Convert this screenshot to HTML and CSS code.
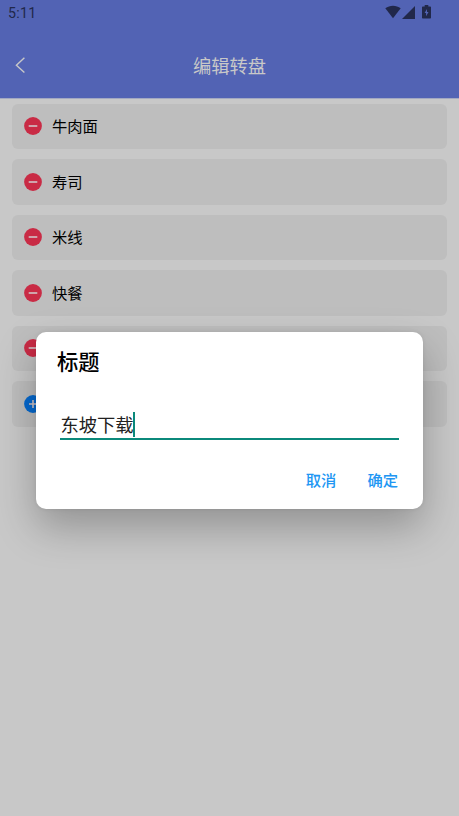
FILE: index.html
```html
<!DOCTYPE html>
<html lang="zh-CN">
<head>
<meta charset="utf-8">
<title>编辑转盘</title>
<link rel="stylesheet" href="styles.css">
</head>
<body>
<header class="header">
  <div class="status">
    <span class="time">5:11</span>
    <div class="status-icons">
      <svg class="wifi" width="16" height="14" viewBox="0 0 16 14"><path d="M0.3 3.3C4.8-.2 11.2-.2 15.7 3.3L8 13.2Z"/></svg>
      <svg class="signal" width="13" height="13" viewBox="0 0 13 13"><path d="M13 0V13H0Z"/></svg>
      <svg class="battery" width="9" height="14" viewBox="0 0 9 14"><path fill-rule="evenodd" d="M2.7 0H6.3V1.4H8.2Q9 1.4 9 2.2V12.7Q9 13.5 8.2 13.5H.8Q0 13.5 0 12.7V2.2Q0 1.4.8 1.4H2.7ZM5 4 2.6 8H4.1V11.2L6.5 7.1H5Z"/></svg>
    </div>
  </div>
  <div class="navbar">
    <svg class="back" width="12" height="18" viewBox="0 0 12 18"><path d="M10.4 1.8 2.4 9.2 10.4 16.6"/></svg>
    <h1 class="title">编辑转盘</h1>
  </div>
</header>
<main class="list">
  <div class="row"><svg class="icon remove" viewBox="0 0 18 18"><circle cx="9" cy="9" r="8.9"/><path d="M4.7 9H13.3"/></svg><span class="label">牛肉面</span></div>
  <div class="row"><svg class="icon remove" viewBox="0 0 18 18"><circle cx="9" cy="9" r="8.9"/><path d="M4.7 9H13.3"/></svg><span class="label">寿司</span></div>
  <div class="row"><svg class="icon remove" viewBox="0 0 18 18"><circle cx="9" cy="9" r="8.9"/><path d="M4.7 9H13.3"/></svg><span class="label">米线</span></div>
  <div class="row"><svg class="icon remove" viewBox="0 0 18 18"><circle cx="9" cy="9" r="8.9"/><path d="M4.7 9H13.3"/></svg><span class="label">快餐</span></div>
  <div class="row"><svg class="icon remove" viewBox="0 0 18 18"><circle cx="9" cy="9" r="8.9"/><path d="M4.7 9H13.3"/></svg></div>
  <div class="row"><svg class="icon add" viewBox="0 0 18 18"><circle cx="9" cy="9" r="8.9"/><path d="M5 9H13M9 5V13"/></svg></div>
</main>
<section class="dialog">
  <h2 class="dialog-title">标题</h2>
  <div class="field"><span>东坡下载</span><i class="caret"></i></div>
  <div class="actions"><span>取消</span><span>确定</span></div>
</section>
</body>
</html>
```
FILE: styles.css
```css
* { box-sizing: border-box; }
body {
  margin: 0;
  width: 459px;
  height: 816px;
  overflow: hidden;
  position: relative;
  background: #c8c8c8;
  font-family: "Noto Sans CJK SC", sans-serif;
}
.header { height: 99px; background: #5263b4; border-bottom: 1px solid #a3a9c2; }
.status {
  height: 26px;
  padding: 0 28px 0 8px;
  display: flex;
  justify-content: space-between;
  color: #21284a;
}
.time { font: 400 14.2px/26px Roboto, sans-serif; letter-spacing: .3px; }
.status-icons { display: flex; align-items: flex-start; padding-top: 5px; fill: #21284a; }
.signal { margin: 1px 7px 0 1px; }
.navbar {
  height: 72px;
  padding: 5px 14px 0;
  display: grid;
  grid-template-columns: 60px 1fr 60px;
  align-items: center;
}
.back { fill: none; stroke: #c8c8c8; stroke-width: 1.4; }
.title {
  margin: 0;
  text-align: center;
  font-size: 18.3px;
  line-height: 26px;
  font-weight: 400;
  color: #c8c8c8;
}
.list { padding: 4.6px 12px; display: flex; flex-direction: column; gap: 10.04px; }
.row {
  height: 45.5px;
  padding-left: 12px;
  display: flex;
  align-items: center;
  gap: 10px;
  border-radius: 6px;
  background: #bebebe;
  font-size: 15.3px;
  color: #000;
}
.label { line-height: 22px; padding-bottom: 2px; }
.icon { width: 18px; height: 18px; fill: none; stroke: #d1c4c6; stroke-width: 1.6; }
.icon circle { stroke: none; }
.remove circle { fill: #c92b45; }
.add circle { fill: #0569cf; }
.dialog {
  position: absolute;
  left: 36px;
  top: 331.5px;
  width: 387px;
  height: 177.5px;
  padding: 13px 24px 0;
  border-radius: 10px;
  background: #fff;
  box-shadow: 0 18px 40px rgba(0, 0, 0, .27), 0 0 4px rgba(0, 0, 0, .08);
}
.dialog-title {
  margin: 0 0 0 -3px;
  font-size: 21.3px;
  line-height: 32px;
  font-weight: 500;
  color: #000;
}
.field {
  height: 31px;
  margin-top: 32px;
  padding: 2px 0 0 .5px;
  display: flex;
  align-items: center;
  border-bottom: 2px solid #0b897b;
  font-size: 18.3px;
  line-height: 26px;
  color: #212121;
}
.caret { width: 2px; height: 25px; margin-left: -.5px; background: #0b897b; }
.actions {
  margin: 27px 1px 0 0;
  display: flex;
  justify-content: flex-end;
  gap: 31px;
  font-size: 15.3px;
  line-height: 24px;
  font-weight: 500;
  color: #2196f3;
}
```
